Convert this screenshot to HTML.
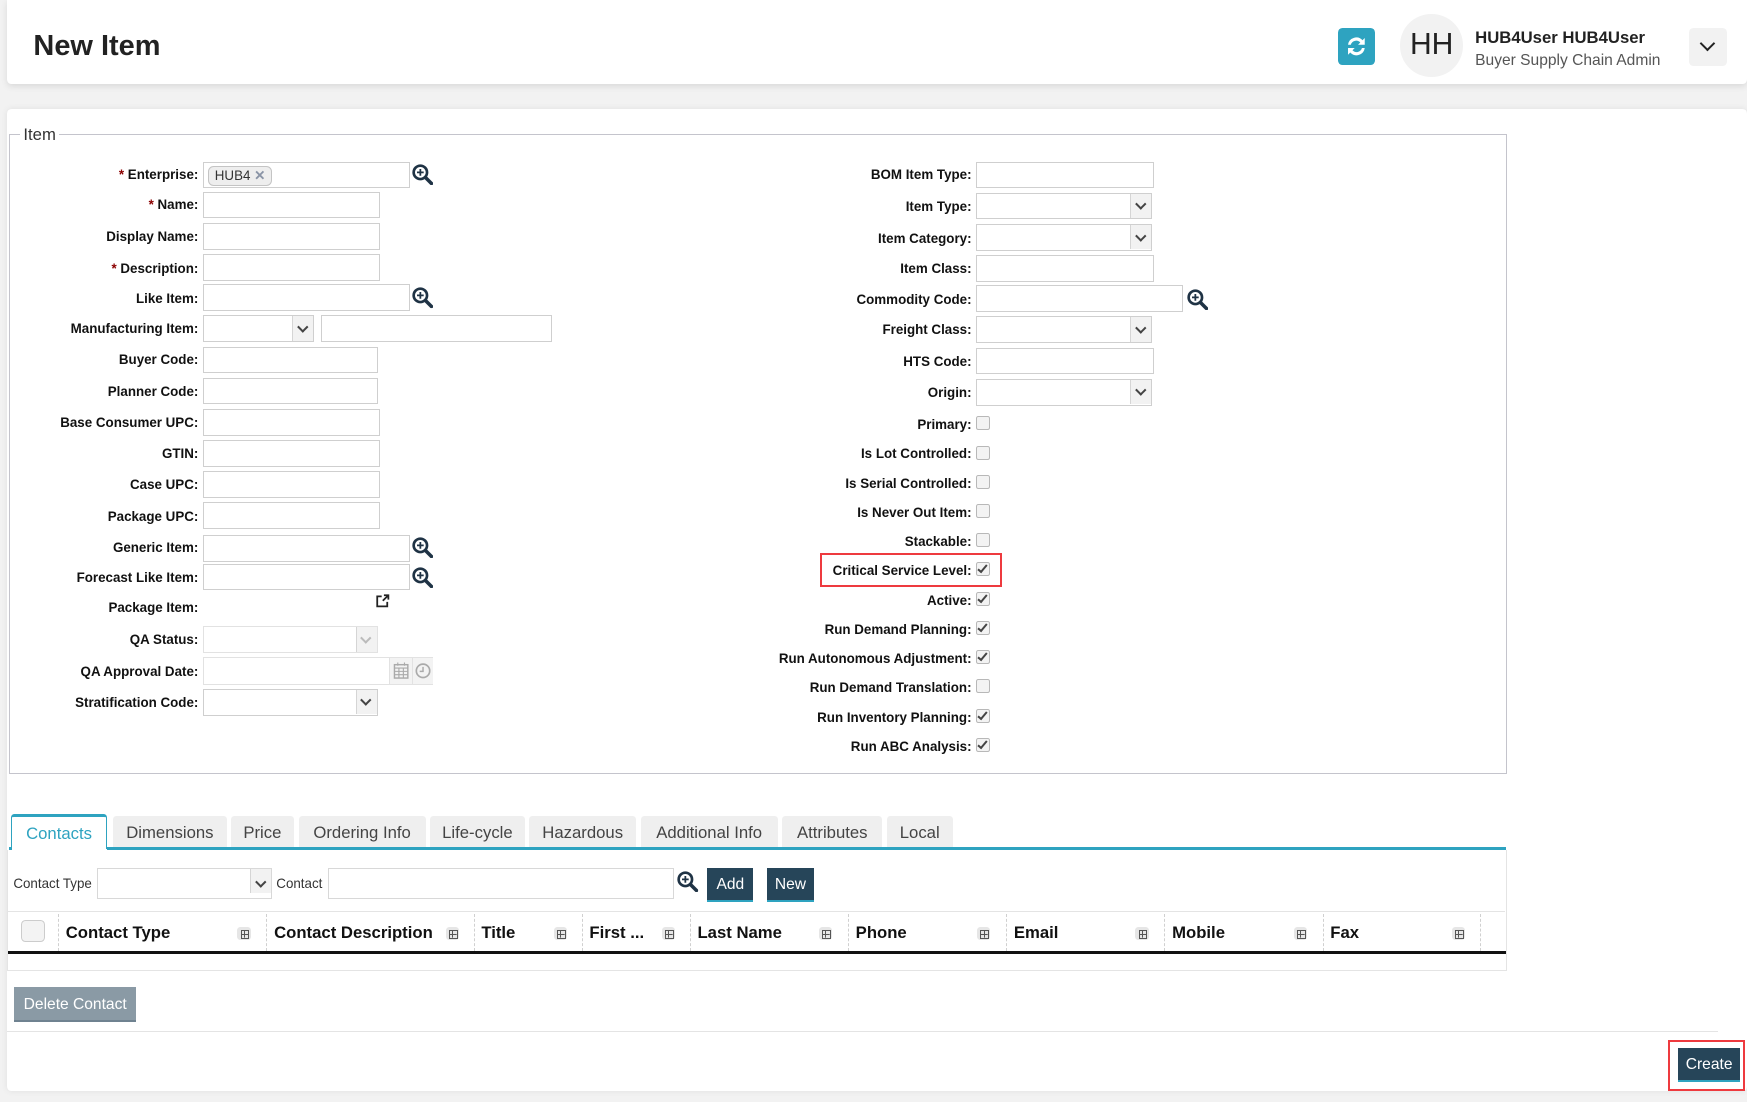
<!DOCTYPE html>
<html><head><meta charset="utf-8"><style>
html,body{margin:0;padding:0;background:#f2f2f2;overflow:hidden}
#w{position:relative;width:1568px;height:989px;zoom:1.11416;font-family:"Liberation Sans",sans-serif;color:#111}
.a{position:absolute}
.lb{position:absolute;font-size:12px;font-weight:bold;text-align:right;white-space:nowrap;line-height:16px;margin-top:1px}
.lb b{color:#8b0000;font-weight:bold}
.in{position:absolute;height:22px;border:1px solid #cfcfcf;background:#fff;box-sizing:border-box}
.dd{position:absolute;height:24px;border:1px solid #cfcfcf;background:#fff;box-sizing:border-box}
.dd:after{content:"";position:absolute;right:0;top:0;width:18px;height:22px;background:#f2f2f2;border-left:1px solid #d5d5d5}
.dd i{position:absolute;right:6px;top:6px;width:5px;height:5px;border-right:2px solid #444;border-bottom:2px solid #444;transform:rotate(45deg);z-index:2}
.cb{position:absolute;width:11px;height:11px;border:1px solid #b8b8b8;border-radius:2px;background:#f3f3f3}
.cb.on:after{content:"";position:absolute;left:3px;top:0px;width:3px;height:7px;border-right:2px solid #444;border-bottom:2px solid #444;transform:rotate(40deg)}
.mg{position:absolute;width:19px;height:19px}
.tab{position:absolute;top:732px;height:29px;background:#efefef;border-radius:3px 3px 0 0;font-size:15px;color:#444;text-align:center;line-height:30px}
.th{position:absolute;top:828px;font-size:15px;font-weight:bold;line-height:18px}
.ti{position:absolute;top:832px;width:12px;height:12px;background:#e6e6e6;border-radius:3px}
.ti:after{content:"";position:absolute;left:3px;top:3px;width:6px;height:6px;border:1px solid #555;background:linear-gradient(#555,#555) 2px 0/1px 6px no-repeat,linear-gradient(#555,#555) 0 2px/6px 1px no-repeat}
.vs{position:absolute;top:820px;height:34px;border-left:1px dashed #d0d0d0}
</style></head><body><div id="w">
<div class="a" style="left:6px;top:0;width:1562px;height:75px;background:#fff;box-shadow:0 2px 6px rgba(0,0,0,.1);border-radius:0 0 4px 4px"></div>
<div class="a" style="left:30px;top:27px;font-size:26px;font-weight:bold;color:#222">New Item</div>
<div class="a" style="left:1201px;top:25px;width:33px;height:33px;background:#2ea3c0;border-radius:4px">
<svg width="33" height="33" viewBox="0 0 33 33"><path d="M9 15a7.5 7.5 0 0 1 13-4l2-2v6h-6l2-2a5 5 0 0 0-8.5 2z M24 18a7.5 7.5 0 0 1-13 4l-2 2v-6h6l-2 2a5 5 0 0 0 8.5-2z" fill="#fff"/></svg></div>
<div class="a" style="left:1257px;top:13px;width:56px;height:56px;border-radius:50%;background:#f2f2f2;font-size:27px;line-height:56px;text-align:center;color:#222">HH</div>
<div class="a" style="left:1324px;top:25px;font-size:15px;font-weight:bold;color:#222">HUB4User HUB4User</div>
<div class="a" style="left:1324px;top:47px;font-size:14px;color:#555">Buyer Supply Chain Admin</div>
<div class="a" style="left:1516px;top:25px;width:34px;height:34px;background:#f2f2f2;border-radius:4px"><div class="a" style="left:12px;top:9px;width:8px;height:8px;border-right:2.5px solid #222;border-bottom:2.5px solid #222;transform:rotate(45deg)"></div></div>
<div class="a" style="left:6px;top:98px;width:1562px;height:881px;background:#fff;box-shadow:0 0 6px rgba(0,0,0,.08);border-radius:4px"></div>
<div class="a" style="left:8px;top:120px;width:1343px;height:573px;border:1px solid #c4c4cc"></div>
<div class="a" style="left:18px;top:112px;background:#fff;padding:0 3px;font-size:15px;color:#333">Item</div>

<div class="lb" style="right:1390px;top:148px"><b>*</b> Enterprise:</div>
<div class="in" style="left:182px;top:145px;width:186px;height:24px"><div class="a" style="left:4px;top:3px;height:16px;padding:0 5px;border:1px solid #c4c4c4;border-radius:5px;background:#eee;font-size:12px;line-height:16px;color:#333">HUB4 <span style="color:#8a94a6;font-weight:bold">✕</span></div></div>
<div class="lb" style="right:1390px;top:175px"><b>*</b> Name:</div><div class="in" style="left:182px;top:172px;width:159px;height:24px"></div>
<div class="lb" style="right:1390px;top:204px">Display Name:</div><div class="in" style="left:182px;top:200px;width:159px;height:24px"></div>
<div class="lb" style="right:1390px;top:232px"><b>*</b> Description:</div><div class="in" style="left:182px;top:228px;width:159px;height:24px"></div>
<div class="lb" style="right:1390px;top:259px">Like Item:</div><div class="in" style="left:182px;top:255px;width:186px;height:24px"></div>
<div class="lb" style="right:1390px;top:286px">Manufacturing Item:</div><div class="dd" style="left:182px;top:283px;width:100px"><i></i></div><div class="in" style="left:288px;top:283px;width:207px;height:24px"></div>
<div class="lb" style="right:1390px;top:314px">Buyer Code:</div><div class="in" style="left:182px;top:311px;width:157px;height:24px"></div>
<div class="lb" style="right:1390px;top:343px">Planner Code:</div><div class="in" style="left:182px;top:339px;width:157px;height:24px"></div>
<div class="lb" style="right:1390px;top:371px">Base Consumer UPC:</div><div class="in" style="left:182px;top:367px;width:159px;height:24px"></div>
<div class="lb" style="right:1390px;top:398px">GTIN:</div><div class="in" style="left:182px;top:395px;width:159px;height:24px"></div>
<div class="lb" style="right:1390px;top:426px">Case UPC:</div><div class="in" style="left:182px;top:423px;width:159px;height:24px"></div>
<div class="lb" style="right:1390px;top:455px">Package UPC:</div><div class="in" style="left:182px;top:451px;width:159px;height:24px"></div>
<div class="lb" style="right:1390px;top:483px">Generic Item:</div><div class="in" style="left:182px;top:480px;width:186px;height:24px"></div>
<div class="lb" style="right:1390px;top:510px">Forecast Like Item:</div><div class="in" style="left:182px;top:506px;width:186px;height:24px"></div>
<div class="lb" style="right:1390px;top:537px">Package Item:</div>
<svg class="a" style="left:337px;top:532px" width="14" height="14" viewBox="0 0 14 14"><path d="M6 3H2v9h9V8" fill="none" stroke="#222" stroke-width="1.6"/><path d="M7 7l5-5M8 2h4v4" fill="none" stroke="#222" stroke-width="1.6"/></svg>
<div class="lb" style="right:1390px;top:565px">QA Status:</div><div class="dd" style="left:182px;top:562px;width:157px;border-color:#e2e2e2"><i style="border-color:#bbb"></i></div>
<div class="lb" style="right:1390px;top:594px">QA Approval Date:</div><div class="in" style="left:182px;top:590px;width:207px;height:25px;border-color:#e2e2e2"></div>
<div class="a" style="left:349px;top:591px;width:20px;height:23px;background:#f3f3f3;border-left:1px solid #e2e2e2">
<svg width="20" height="23" viewBox="0 0 20 23"><rect x="4" y="6" width="12" height="12" fill="none" stroke="#aaa" stroke-width="1.3"/><path d="M4 9h12M4 12h12M4 15h12M8 9v9M12 9v9M7 4v3M13 4v3" stroke="#aaa" stroke-width="1"/></svg></div>
<div class="a" style="left:370px;top:591px;width:18px;height:23px;background:#f3f3f3;border-left:1px solid #e2e2e2"><svg width="18" height="23" viewBox="0 0 18 23"><circle cx="9" cy="11.5" r="6" fill="none" stroke="#aaa" stroke-width="1.5"/><path d="M9 8v4h-3" fill="none" stroke="#aaa" stroke-width="1.3"/></svg></div>
<div class="lb" style="right:1390px;top:622px">Stratification Code:</div><div class="dd" style="left:182px;top:618px;width:157px;height:25px"><i></i></div>

<div class="lb" style="right:696px;top:148px">BOM Item Type:</div><div class="in" style="left:876px;top:145px;width:160px;height:24px"></div>
<div class="lb" style="right:696px;top:177px">Item Type:</div><div class="dd" style="left:876px;top:173px;width:158px"><i></i></div>
<div class="lb" style="right:696px;top:205px">Item Category:</div><div class="dd" style="left:876px;top:201px;width:158px"><i></i></div>
<div class="lb" style="right:696px;top:232px">Item Class:</div><div class="in" style="left:876px;top:229px;width:160px;height:24px"></div>
<div class="lb" style="right:696px;top:260px">Commodity Code:</div><div class="in" style="left:876px;top:256px;width:186px;height:24px"></div>
<div class="lb" style="right:696px;top:287px">Freight Class:</div><div class="dd" style="left:876px;top:284px;width:158px"><i></i></div>
<div class="lb" style="right:696px;top:316px">HTS Code:</div><div class="in" style="left:876px;top:312px;width:160px;height:24px"></div>
<div class="lb" style="right:696px;top:344px">Origin:</div><div class="dd" style="left:876px;top:340px;width:158px"><i></i></div>
<div class="lb" style="right:696px;top:372px">Primary:</div><div class="cb" style="left:876px;top:373px"></div>
<div class="lb" style="right:696px;top:398px">Is Lot Controlled:</div><div class="cb" style="left:876px;top:400px"></div>
<div class="lb" style="right:696px;top:425px">Is Serial Controlled:</div><div class="cb" style="left:876px;top:426px"></div>
<div class="lb" style="right:696px;top:451px">Is Never Out Item:</div><div class="cb" style="left:876px;top:452px"></div>
<div class="lb" style="right:696px;top:477px">Stackable:</div><div class="cb" style="left:876px;top:478px"></div>
<div class="lb" style="right:696px;top:503px">Critical Service Level:</div><div class="cb on" style="left:876px;top:504px"></div>
<div class="a" style="left:736px;top:496px;width:160px;height:27px;border:2px solid #ee3a3f"></div>
<div class="lb" style="right:696px;top:530px">Active:</div><div class="cb on" style="left:876px;top:531px"></div>
<div class="lb" style="right:696px;top:556px">Run Demand Planning:</div><div class="cb on" style="left:876px;top:557px"></div>
<div class="lb" style="right:696px;top:582px">Run Autonomous Adjustment:</div><div class="cb on" style="left:876px;top:583px"></div>
<div class="lb" style="right:696px;top:608px">Run Demand Translation:</div><div class="cb" style="left:876px;top:609px"></div>
<div class="lb" style="right:696px;top:635px">Run Inventory Planning:</div><div class="cb on" style="left:876px;top:636px"></div>
<div class="lb" style="right:696px;top:661px">Run ABC Analysis:</div><div class="cb on" style="left:876px;top:662px"></div>

<svg width="0" height="0" style="position:absolute"><defs><symbol id="m" viewBox="0 0 19 19"><circle cx="7.5" cy="7.5" r="6" fill="none" stroke="#1f3345" stroke-width="2.4"/><path d="M12 12l5.5 5.5" stroke="#1f3345" stroke-width="3.2" stroke-linecap="round"/><path d="M7.5 4.5v6M4.5 7.5h6" stroke="#1f3345" stroke-width="1.6"/></symbol></defs></svg>
<svg class="mg" style="left:370px;top:147px"><use href="#m"/></svg>
<svg class="mg" style="left:370px;top:258px"><use href="#m"/></svg>
<svg class="mg" style="left:370px;top:482px"><use href="#m"/></svg>
<svg class="mg" style="left:370px;top:509px"><use href="#m"/></svg>
<svg class="mg" style="left:1065px;top:259px"><use href="#m"/></svg>
<svg class="mg" style="left:608px;top:782px"><use href="#m"/></svg>

<div class="tab" style="left:10px;width:86px;background:#fff;border:1px solid #2ea3c0;border-top:3px solid #2ea3c0;border-bottom:none;top:731px;height:31px;color:#2ea3c0;box-sizing:border-box;line-height:30px">Contacts</div>
<div class="tab" style="left:101px;width:103px">Dimensions</div>
<div class="tab" style="left:207px;width:57px">Price</div>
<div class="tab" style="left:268px;width:114px">Ordering Info</div>
<div class="tab" style="left:386px;width:85px">Life-cycle</div>
<div class="tab" style="left:475px;width:96px">Hazardous</div>
<div class="tab" style="left:575px;width:123px">Additional Info</div>
<div class="tab" style="left:702px;width:90px">Attributes</div>
<div class="tab" style="left:796px;width:59px">Local</div>
<div class="a" style="left:96px;top:760px;width:1256px;height:3px;background:#2ea3c0"></div>
<div class="a" style="left:8px;top:760px;width:3px;height:3px;background:#2ea3c0"></div>
<div class="a" style="left:6px;top:763px;width:1345px;height:108px;border:1px solid #e4e4e4;border-top:none"></div>

<div class="a" style="left:12px;top:786px;font-size:12px;color:#333">Contact Type</div>
<div class="dd" style="left:87px;top:779px;width:157px;height:28px;border-color:#d8d8d8"><i style="top:8px"></i></div>
<div class="a" style="left:248px;top:786px;font-size:12px;color:#333">Contact</div>
<div class="in" style="left:294px;top:779px;width:311px;height:28px;border-color:#d8d8d8"></div>
<div class="a" style="left:635px;top:779px;width:41px;height:31px;background:#264559;border-bottom:2px solid #2ea3c0;box-sizing:border-box;color:#fff;font-size:14px;text-align:center;line-height:31px">Add</div>
<div class="a" style="left:688px;top:779px;width:43px;height:31px;background:#264559;border-bottom:2px solid #2ea3c0;box-sizing:border-box;color:#fff;font-size:14px;text-align:center;line-height:31px">New</div>
<div class="a" style="left:6px;top:818px;width:1345px;height:1px;background:#e4e4e4"></div>

<div class="a" style="left:19px;top:826px;width:20px;height:18px;border:1px solid #ccc;border-radius:4px;background:#f3f3f3"></div>
<div class="vs" style="left:52px"></div><div class="vs" style="left:239px"></div><div class="vs" style="left:425px"></div><div class="vs" style="left:522px"></div><div class="vs" style="left:619px"></div><div class="vs" style="left:761px"></div><div class="vs" style="left:903px"></div><div class="vs" style="left:1045px"></div><div class="vs" style="left:1187px"></div><div class="vs" style="left:1328px"></div>
<div class="th" style="left:59px">Contact Type</div><div class="ti" style="left:213px"></div>
<div class="th" style="left:246px">Contact Description</div><div class="ti" style="left:400px"></div>
<div class="th" style="left:432px">Title</div><div class="ti" style="left:497px"></div>
<div class="th" style="left:529px">First ...</div><div class="ti" style="left:594px"></div>
<div class="th" style="left:626px">Last Name</div><div class="ti" style="left:735px"></div>
<div class="th" style="left:768px">Phone</div><div class="ti" style="left:877px"></div>
<div class="th" style="left:910px">Email</div><div class="ti" style="left:1019px"></div>
<div class="th" style="left:1052px">Mobile</div><div class="ti" style="left:1161px"></div>
<div class="th" style="left:1194px">Fax</div><div class="ti" style="left:1303px"></div>
<div class="a" style="left:7px;top:854px;width:1345px;height:2px;background:#111"></div>

<div class="a" style="left:13px;top:886px;width:109px;height:31px;background:#8a9aa5;border-bottom:2px solid #6f8290;box-sizing:border-box;color:#fff;font-size:14px;text-align:center;line-height:32px">Delete Contact</div>
<div class="a" style="left:6px;top:925px;width:1536px;height:1px;background:#e4e4e4"></div>
<div class="a" style="left:1497px;top:933px;width:66px;height:43px;border:2px solid #ee3a3f"></div>
<div class="a" style="left:1506px;top:941px;width:56px;height:30px;background:#264559;border-bottom:2px solid #2ea3c0;box-sizing:border-box;color:#fff;font-size:14px;text-align:center;line-height:30px">Create</div>
</div></body></html>
